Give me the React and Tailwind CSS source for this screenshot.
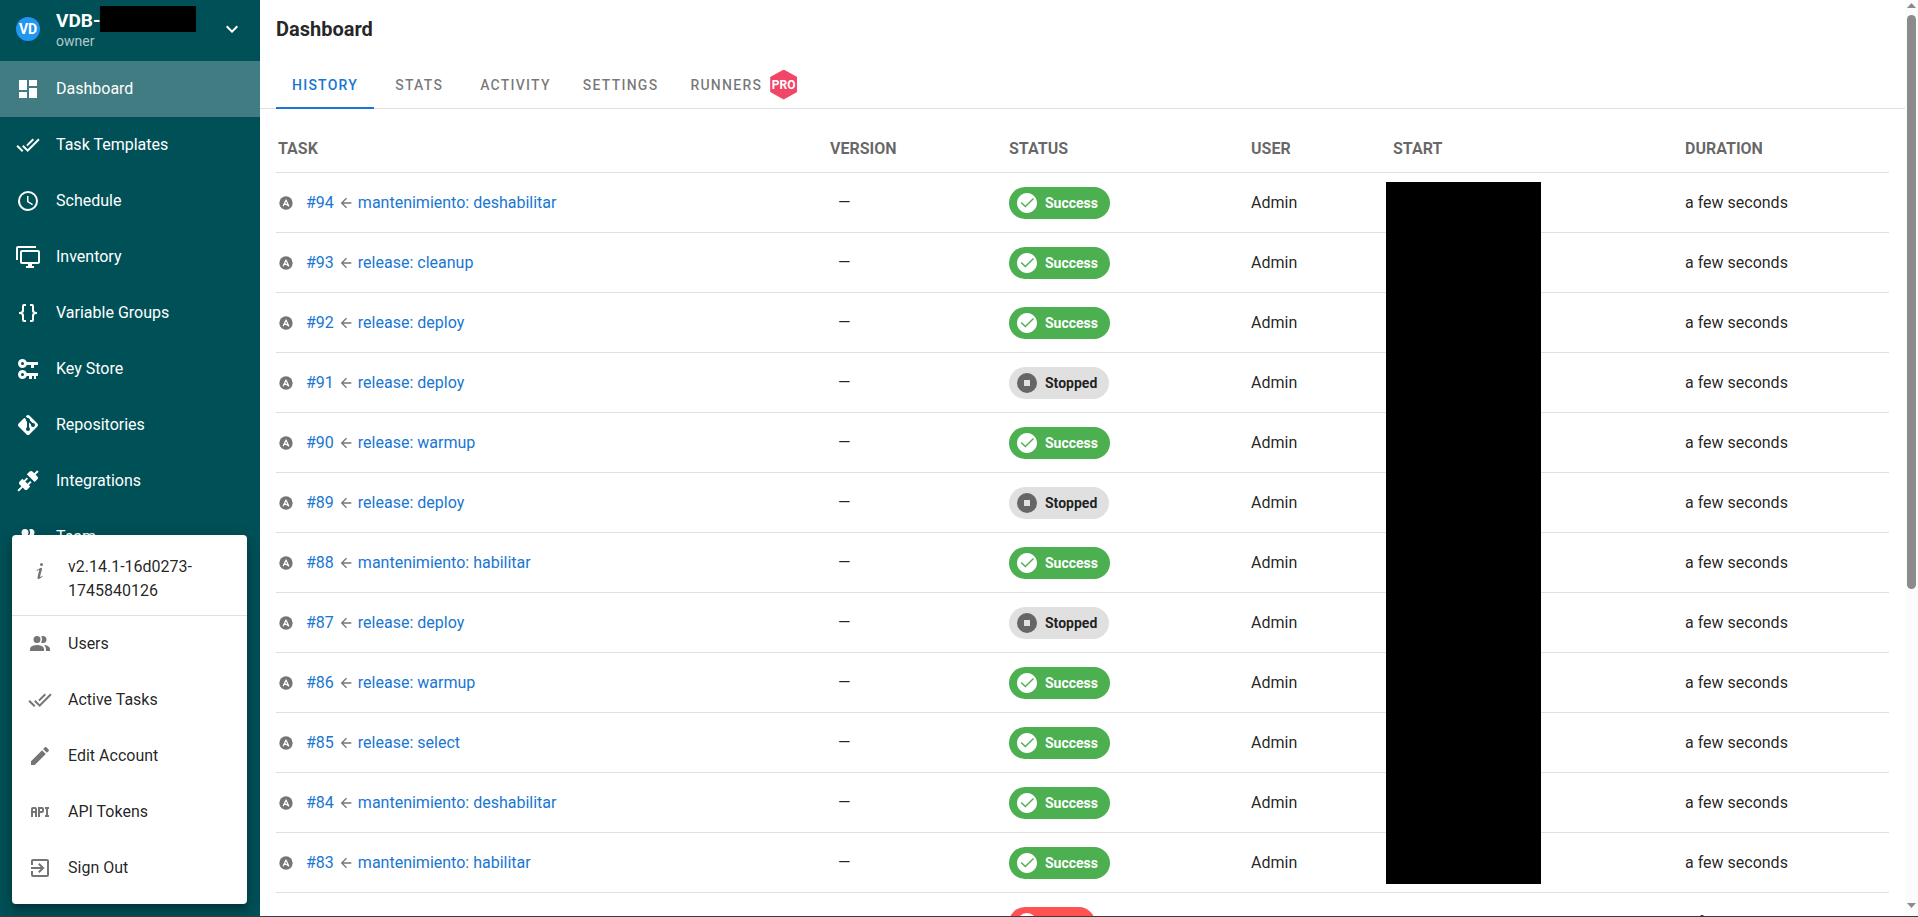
import { useState } from 'react';

const icons = {
  dashboard: 'M13,3V9H21V3M13,21H21V11H13M3,21H11V15H3M3,13H11V3H3V13Z',
  checkAll: 'M0.41,13.41L6,19L7.41,17.58L1.83,12M22.24,5.58L11.66,16.17L7.5,12L6.07,13.41L11.66,19L23.66,7M18,7L16.59,5.58L10.24,11.93L11.66,13.34L18,7Z',
  clock: 'M12,20A8,8 0 0,0 20,12A8,8 0 0,0 12,4A8,8 0 0,0 4,12A8,8 0 0,0 12,20M12,2A10,10 0 0,1 22,12A10,10 0 0,1 12,22C6.47,22 2,17.5 2,12A10,10 0 0,1 12,2M12.5,7V12.25L17,14.92L16.25,16.15L11,13V7H12.5Z',
  monitors: 'M22,17V7H6V17H22M22,5A2,2 0 0,1 24,7V17C24,18.11 23.1,19 22,19H16V21H18V23H10V21H12V19H6C4.89,19 4,18.11 4,17V7A2,2 0 0,1 6,5H22M2,3V15H0V3A2,2 0 0,1 2,1H20V3H2Z',
  braces: 'M8,3A2,2 0 0,0 6,5V9A2,2 0 0,1 4,11H3V13H4A2,2 0 0,1 6,15V19A2,2 0 0,0 8,21H10V19H8V14A2,2 0 0,0 6,12A2,2 0 0,0 8,10V5H10V3M16,3A2,2 0 0,1 18,5V9A2,2 0 0,0 20,11H21V13H20A2,2 0 0,0 18,15V19A2,2 0 0,1 16,21H14V19H16V14A2,2 0 0,1 18,12A2,2 0 0,1 16,10V5H14V3H16Z',
  keys: 'M6.5,2C8.46,2 10.13,3.25 10.75,5H22V8H18V11H15V8H10.75C10.13,9.75 8.46,11 6.5,11C4,11 2,9 2,6.5C2,4 4,2 6.5,2M6.5,5A1.5,1.5 0 0,0 5,6.5A1.5,1.5 0 0,0 6.5,8A1.5,1.5 0 0,0 8,6.5A1.5,1.5 0 0,0 6.5,5M6.5,13C8.46,13 10.13,14.25 10.75,16H22V19H20V22H18V19H16V22H13V19H10.75C10.13,20.75 8.46,22 6.5,22C4,22 2,20 2,17.5C2,15 4,13 6.5,13M6.5,16A1.5,1.5 0 0,0 5,17.5A1.5,1.5 0 0,0 6.5,19A1.5,1.5 0 0,0 8,17.5A1.5,1.5 0 0,0 6.5,16Z',
  git: 'M2.6,10.59L8.38,4.8L10.07,6.5C9.83,7.35 10.22,8.28 11,8.73V14.27C10.4,14.61 10,15.26 10,16A2,2 0 0,0 12,18A2,2 0 0,0 14,16C14,15.26 13.6,14.61 13,14.27V9.41L15.07,11.5C15,11.65 15,11.82 15,12A2,2 0 0,0 17,14A2,2 0 0,0 19,12A2,2 0 0,0 17,10C16.82,10 16.65,10 16.5,10.07L13.93,7.5C14.19,6.57 13.71,5.55 12.78,5.16C12.35,5 11.9,4.96 11.5,5.07L9.8,3.38L10.59,2.6C11.37,1.81 12.63,1.81 13.41,2.6L21.4,10.59C22.19,11.37 22.19,12.63 21.4,13.41L13.41,21.4C12.63,22.19 11.37,22.19 10.59,21.4L2.6,13.41C1.81,12.63 1.81,11.37 2.6,10.59Z',
  connection: 'M21.4 7.5C22.2 8.3 22.2 9.6 21.4 10.3L18.6 13.1L10.8 5.3L13.6 2.5C14.4 1.7 15.7 1.7 16.4 2.5L18.2 4.3L21.2 1.3L22.6 2.7L19.6 5.7L21.4 7.5M15.6 13.3L14.2 11.9L11.4 14.7L9.3 12.6L12.1 9.8L10.7 8.4L7.9 11.2L6.4 9.8L3.6 12.6C2.8 13.4 2.8 14.7 3.6 15.4L5.4 17.2L1.4 21.2L2.8 22.6L6.8 18.6L8.6 20.4C9.4 21.2 10.7 21.2 11.4 20.4L14.2 17.6L12.8 16.2L15.6 13.3Z',
  users: 'M16 17V19H2V17S2 13 9 13 16 17 16 17M12.5 7.5A3.5 3.5 0 1 0 9 11A3.5 3.5 0 0 0 12.5 7.5M15.94 13A5.32 5.32 0 0 1 18 17V19H22V17S22 13.37 15.94 13M15 4A3.39 3.39 0 0 0 13.07 4.59A5 5 0 0 1 13.07 10.41A3.39 3.39 0 0 0 15 11A3.5 3.5 0 0 0 15 4Z',
  info: 'M13.5,4A1.5,1.5 0 0,0 12,5.5A1.5,1.5 0 0,0 13.5,7A1.5,1.5 0 0,0 15,5.5A1.5,1.5 0 0,0 13.5,4M13.14,8.77C11.95,8.87 8.7,11.46 8.7,11.46C8.5,11.61 8.56,11.6 8.72,11.88C8.88,12.15 8.86,12.17 9.05,12.04C9.25,11.91 9.58,11.7 10.13,11.36C12.25,10 10.47,13.14 9.56,18.43C9.2,21.05 11.56,19.7 12.17,19.3C12.77,18.91 14.38,17.8 14.54,17.69C14.76,17.54 14.6,17.42 14.43,17.17C14.31,17 14.19,17.12 14.19,17.12C13.54,17.55 12.35,18.45 12.19,17.88C12,17.31 13.22,13.4 13.89,10.71C14,10.07 14.3,8.67 13.14,8.77Z',
  pencil: 'M20.71,7.04C21.1,6.65 21.1,6 20.71,5.63L18.37,3.29C18,2.9 17.35,2.9 16.96,3.29L15.12,5.12L18.87,8.87M3,17.25V21H6.75L17.81,9.93L14.06,6.18L3,17.25Z',
  api: 'M7 7H5A2 2 0 0 0 3 9V17H5V13H7V17H9V9A2 2 0 0 0 7 7M7 11H5V9H7M14 7H10V17H12V13H14A2 2 0 0 0 16 11V9A2 2 0 0 0 14 7M14 11H12V9H14M20 9V15H21V17H17V15H18V9H17V7H21V9Z',
  exit: 'M19,3H5C3.89,3 3,3.89 3,5V9H5V5H19V19H5V15H3V19A2,2 0 0,0 5,21H19A2,2 0 0,0 21,19V5C21,3.89 20.1,3 19,3M10.08,15.58L11.5,17L16.5,12L11.5,7L10.08,8.41L12.67,11H3V13H12.67L10.08,15.58Z',
  chevron: 'M7.41,8.58L12,13.17L16.59,8.58L18,10L12,16L6,10L7.41,8.58Z',
  arrowLeft: 'M20,11V13H8L13.5,18.5L12.08,19.92L4.16,12L12.08,4.08L13.5,5.5L8,11H20Z',
  success: 'M12 2C6.5 2 2 6.5 2 12S6.5 22 12 22 22 17.5 22 12 17.5 2 12 2M10.4 16.6L5.6 11.9L6.6 10.9L10.4 14.6L18 7L19 8L10.4 16.6Z',
  stopped: 'M12,2A10,10 0 0,0 2,12A10,10 0 0,0 12,22A10,10 0 0,0 22,12A10,10 0 0,0 12,2M9,9H15V15H9',
  failed: 'M13,13H11V7H13M13,17H11V15H13M12,2A10,10 0 0,0 2,12A10,10 0 0,0 12,22A10,10 0 0,0 22,12A10,10 0 0,0 12,2Z',
};

const navItems = [
  { icon: 'dashboard', label: 'Dashboard' },
  { icon: 'checkAll', label: 'Task Templates' },
  { icon: 'clock', label: 'Schedule' },
  { icon: 'monitors', label: 'Inventory' },
  { icon: 'braces', label: 'Variable Groups' },
  { icon: 'keys', label: 'Key Store' },
  { icon: 'git', label: 'Repositories' },
  { icon: 'connection', label: 'Integrations' },
  { icon: 'users', label: 'Team' },
];

const menuItems = [
  { icon: 'users', label: 'Users' },
  { icon: 'checkAll', label: 'Active Tasks' },
  { icon: 'pencil', label: 'Edit Account' },
  { icon: 'api', label: 'API Tokens' },
  { icon: 'exit', label: 'Sign Out' },
];

const tabs = ['History', 'Stats', 'Activity', 'Settings', 'Runners'];

const tasks = [
  { id: 94, name: 'mantenimiento: deshabilitar', status: 'success' },
  { id: 93, name: 'release: cleanup', status: 'success' },
  { id: 92, name: 'release: deploy', status: 'success' },
  { id: 91, name: 'release: deploy', status: 'stopped' },
  { id: 90, name: 'release: warmup', status: 'success' },
  { id: 89, name: 'release: deploy', status: 'stopped' },
  { id: 88, name: 'mantenimiento: habilitar', status: 'success' },
  { id: 87, name: 'release: deploy', status: 'stopped' },
  { id: 86, name: 'release: warmup', status: 'success' },
  { id: 85, name: 'release: select', status: 'success' },
  { id: 84, name: 'mantenimiento: deshabilitar', status: 'success' },
  { id: 83, name: 'mantenimiento: habilitar', status: 'success' },
  { id: 82, name: 'release: deploy', status: 'failed' },
];

const statuses = {
  success: { label: 'Success', chip: 'bg-[#4caf50] text-white', iconColor: 'text-white' },
  stopped: { label: 'Stopped', chip: 'bg-[#e0e0e0] text-black/87', iconColor: 'text-[#666666]' },
  failed: { label: 'Failed', chip: 'bg-[#ff5252] text-white', iconColor: 'text-white' },
};

function Icon({ name, className = 'size-6' }) {
  return (
    <svg viewBox="0 0 24 24" fill="currentColor" aria-hidden="true" className={`shrink-0 ${className}`}>
      <path d={icons[name]} />
    </svg>
  );
}

function AnsibleIcon() {
  return (
    <svg viewBox="0 0 24 24" aria-hidden="true" className="size-4 shrink-0">
      <circle cx="12" cy="12" r="10" fill="#757575" />
      <path d="M7.6 17L12 7.4L16.2 16.6L9.6 12.4" fill="none" stroke="#fff" strokeWidth="1.8" strokeLinejoin="round" />
    </svg>
  );
}

function StatusChip({ status }) {
  const { label, chip, iconColor } = statuses[status];
  return (
    <span className={`inline-flex h-8 items-center gap-1.5 rounded-full pl-1.5 pr-3 align-middle text-sm font-bold ${chip}`}>
      <Icon name={status} className={`size-6 ${iconColor}`} />
      {label}
    </span>
  );
}

function UserMenu() {
  return (
    <div className="absolute bottom-3 left-3 w-[235px] rounded bg-white text-black/87 shadow-[0_5px_5px_-3px_rgba(0,0,0,0.2),0_8px_10px_1px_rgba(0,0,0,0.14),0_3px_14px_2px_rgba(0,0,0,0.12)]">
      <div className="flex h-[81px] items-start gap-4 border-b border-black/12 px-4 pt-5">
        <Icon name="info" className="mt-1 size-6 text-[#757575]" />
        <span className="w-40 leading-6">v2.14.1-16d0273-1745840126</span>
      </div>
      <ul className="pb-2">
        {menuItems.map((item) => (
          <li key={item.label}>
            <button type="button" className="flex h-14 w-full items-center gap-4 px-4 text-left hover:bg-black/5">
              <Icon name={item.icon} className="size-6 text-[#757575]" />
              {item.label}
            </button>
          </li>
        ))}
      </ul>
    </div>
  );
}

function Sidebar() {
  return (
    <aside className="relative flex w-[260px] shrink-0 flex-col overflow-hidden bg-[#005057] text-white">
      <button type="button" className="flex h-[61px] shrink-0 items-center gap-4 px-4 pb-1 text-left">
        <span className="flex size-6 shrink-0 items-center justify-center rounded-full bg-[#2196f3] text-sm font-bold">VD</span>
        <span className="flex grow flex-col">
          <span className="flex h-6 items-center text-[19px] leading-6 font-bold">
            VDB-
            <span className="mb-1 h-[26px] w-24 bg-black"></span>
          </span>
          <span className="text-sm leading-4 text-white/70">owner</span>
        </span>
        <Icon name="chevron" />
      </button>
      <nav>
        {navItems.map((item, i) => (
          <a
            key={item.label}
            href="#"
            className={`flex h-14 items-center gap-4 px-4 ${i === 0 ? 'bg-[#407c81]' : 'hover:bg-white/10'}`}
          >
            <Icon name={item.icon} />
            {item.label}
          </a>
        ))}
      </nav>
      <UserMenu />
    </aside>
  );
}

function TaskTable() {
  return (
    <div className="relative px-4 pt-4">
      <table className="w-full table-fixed border-separate border-spacing-0 text-left [&_td]:border-b [&_td]:border-black/12 [&_td]:px-0.5 [&_th]:border-b [&_th]:border-black/12 [&_th]:px-0.5">
        <thead>
          <tr className="h-12 text-black/60">
            <th className="w-[552px] font-bold">TASK</th>
            <th className="w-[179px] font-bold">VERSION</th>
            <th className="w-[242px] font-bold">STATUS</th>
            <th className="w-[142px] font-bold">USER</th>
            <th className="w-[292px] font-bold">START</th>
            <th className="font-bold">DURATION</th>
          </tr>
        </thead>
        <tbody className="text-black/87">
          {tasks.map((task) => (
            <tr key={task.id} className="h-[60px]">
              <td>
                <div className="flex items-center">
                  <AnsibleIcon />
                  <a href="#" className="ml-3 text-[#1976d2]">#{task.id}</a>
                  <Icon name="arrowLeft" className="mx-1 size-4 text-[#757575]" />
                  <a href="#" className="text-[#1976d2]">{task.name}</a>
                </div>
              </td>
              <td>
                <span className="pl-2">—</span>
              </td>
              <td>
                <StatusChip status={task.status} />
              </td>
              <td>Admin</td>
              <td></td>
              <td>a few seconds</td>
            </tr>
          ))}
        </tbody>
      </table>
      <div className="absolute top-[73px] left-[1126px] h-[702px] w-[155px] bg-black"></div>
    </div>
  );
}

function Scrollbar() {
  return (
    <div className="flex w-[13px] shrink-0 flex-col items-center bg-[#fcfcfc] text-[#8b8b8b]">
      <svg viewBox="0 0 9 5" fill="currentColor" aria-hidden="true" className="mt-[3px] h-[5px] w-[9px]">
        <path d="M4.5 0L9 5H0Z" />
      </svg>
      <div className="mt-[7px] h-[574px] w-[9px] rounded-full bg-[#8b8b8b]"></div>
      <svg viewBox="0 0 9 5" fill="currentColor" aria-hidden="true" className="mt-auto mb-2 h-[5px] w-[9px]">
        <path d="M0 0H9L4.5 5Z" />
      </svg>
    </div>
  );
}

function App() {
  const [tab, setTab] = useState('History');

  return (
    <div className="flex h-screen overflow-hidden border-b border-[#46383a] bg-white font-[Roboto,sans-serif] text-base">
      <Sidebar />
      <main className="min-w-0 grow overflow-hidden">
        <h1 className="flex h-[60px] items-center px-4 pb-0.5 text-xl font-bold text-black/87">Dashboard</h1>
        <div role="tablist" className="flex h-[49px] border-b border-black/12 px-4">
          {tabs.map((name) => (
            <button
              key={name}
              type="button"
              role="tab"
              aria-selected={tab === name}
              onClick={() => setTab(name)}
              className={`-mb-px flex min-w-[90px] items-center justify-center border-b-2 px-4 pt-0.5 text-sm font-medium tracking-[1.25px] uppercase ${
                tab === name ? 'border-[#1976d2] text-[#1976d2]' : 'border-transparent text-black/54'
              }`}
            >
              {name}
              {name === 'Runners' && (
                <span className="ml-2 flex h-[30px] w-[27px] items-center justify-center bg-[#f14668] text-xs font-bold tracking-normal text-white [clip-path:polygon(50%_0,100%_25%,100%_75%,50%_100%,0_75%,0_25%)]">
                  PRO
                </span>
              )}
            </button>
          ))}
        </div>
        <TaskTable />
      </main>
      <Scrollbar />
    </div>
  );
}

export default App;
